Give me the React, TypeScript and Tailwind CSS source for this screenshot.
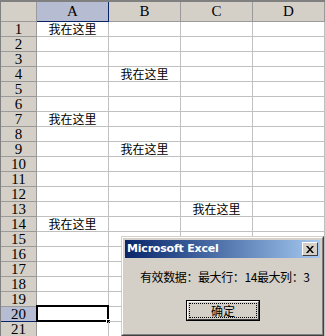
const cols = ["A", "B", "C", "D"];

const data: Record<number, number> = {
  1: 0,
  4: 1,
  7: 0,
  9: 1,
  13: 2,
  14: 0,
};

const rows = Array.from({ length: 21 }, (_, i) => i + 1);

const cjk = { fontFamily: '"Noto Sans CJK SC", "Noto Sans", sans-serif' };
const serif = { fontFamily: '"Liberation Serif", serif' };

const App = () => {
  return (
    <div className="relative w-[325px] h-[336px] overflow-hidden bg-white border-t-2 border-l border-[#808080]">
      {/* header row */}
      <div className="flex h-[20px]">
        <div className="w-[36px] shrink-0 bg-[#d4d0c8] border-r border-b border-[#9a9a9a]" />
        {cols.map((c, i) => (
          <div
            key={c}
            style={serif}
            className={
              i === 0
                ? "w-[72px] shrink-0 bg-[#b6bdd2] border-r border-b border-[#0a246a] text-[15px] leading-[19px] text-center text-black"
                : "w-[72px] shrink-0 bg-[#d4d0c8] border-r border-b border-[#9a9a9a] text-[15px] leading-[19px] text-center text-black"
            }
          >
            {c}
          </div>
        ))}
      </div>

      {rows.map((r) => (
        <div key={r} className="flex h-[15px]">
          <div
            style={serif}
            className={
              r === 20
                ? "w-[36px] shrink-0 bg-[#b6bdd2] border-r border-b border-[#0a246a] text-[15px] leading-[14px] text-center text-black"
                : "w-[36px] shrink-0 bg-[#d4d0c8] border-r border-b border-[#9a9a9a] text-[15px] leading-[14px] text-center text-black"
            }
          >
            {r}
          </div>
          {cols.map((c, i) => (
            <div
              key={c}
              style={cjk}
              className="relative w-[72px] shrink-0 border-r border-b border-[#c0c0c0] text-[12px] leading-[14px] text-center text-black whitespace-nowrap"
            >
              {data[r] === i ? "我在这里" : ""}
              {r === 20 && i === 0 && (
                <>
                  <div className="absolute left-[-1px] top-[-2px] w-[73px] h-[17px] border-2 border-black" />
                  <div className="absolute right-[-3px] bottom-[-3px] w-[5px] h-[5px] bg-black border border-white" />
                </>
              )}
            </div>
          ))}
        </div>
      ))}

      {/* message box */}
      <div className="absolute left-[120px] top-[234px] w-[203px] h-[100px] bg-[#d4d0c8] border border-t-[#d4d0c8] border-l-[#d4d0c8] border-r-[#404040] border-b-[#404040]">
        <div className="h-full border border-t-white border-l-white border-r-[#808080] border-b-[#808080] p-[2px]">
          <div className="flex items-center justify-between h-[18px] pl-[2px] pr-[2px] bg-gradient-to-r from-[#0a246a] to-[#a6caf0]">
            <span
              className="text-white font-bold text-[11px] leading-[18px] tracking-[-0.2px]"
              style={{ fontFamily: '"DejaVu Sans", sans-serif' }}
            >
              Microsoft Excel
            </span>
            <div className="w-[16px] h-[14px] bg-[#d4d0c8] border border-t-white border-l-white border-r-[#404040] border-b-[#404040] flex items-center justify-center">
              <svg width="8" height="7" viewBox="0 0 8 7">
                <path d="M0 0h2l2 2.5L6 0h2L5 3.5 8 7H6L4 4.5 2 7H0l3-3.5z" fill="#000" />
              </svg>
            </div>
          </div>
          <div
            style={cjk}
            className="pl-[15px] pt-[11px] h-[29px] text-[12px] leading-[16px] tracking-[-0.4px] text-black whitespace-nowrap"
          >
            有效数据：最大行：14最大列：3
          </div>
          <div className="flex justify-center pt-[13px] pl-[1px]">
            <div className="w-[74px] h-[21px] border border-black bg-[#d4d0c8]">
              <div className="h-full border border-t-white border-l-white border-r-[#404040] border-b-[#404040] p-[1px]">
                <div
                  style={cjk}
                  className="h-full border border-dotted border-black text-[12px] leading-[13px] text-center text-black"
                >
                  确定
                </div>
              </div>
            </div>
          </div>
        </div>
      </div>
    </div>
  );
};

export default App;
